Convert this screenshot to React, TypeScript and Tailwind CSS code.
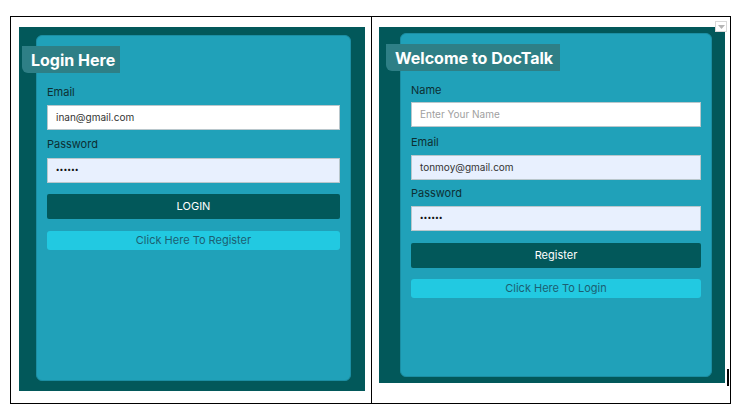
import React from "react";

const font = { fontFamily: "Inter, 'Noto Sans', sans-serif" };

function Label({ text, mt }: { text: string; mt: string }) {
  return <div className={`${mt} h-[16px] leading-[16px] text-[11px] text-[#0d2f33]`}>{text}</div>;
}

function Input({ value, placeholder, fill, mt }: { value?: string; placeholder?: string; fill?: boolean; mt: string }) {
  return (
    <div
      className={`${mt} h-[25px] flex items-center pl-[8px] border border-[#b9c7cc] text-[10px] ${
        fill ? "bg-[#e8f0fe]" : "bg-white"
      } ${value ? "text-[#333]" : "text-[#a0a0a0]"}`}
    >
      {value ?? placeholder}
    </div>
  );
}

function Dots({ mt }: { mt: string }) {
  return (
    <div className={`${mt} h-[25px] flex items-center pl-[8px] border border-[#b9c7cc] bg-[#e8f0fe] text-[#111] text-[7px] tracking-[0.5px] font-bold`}>
      ••••••
    </div>
  );
}

function Button({ text, mt }: { text: string; mt: string }) {
  return (
    <div className={`${mt} h-[25px] flex items-center justify-center bg-[#02585a] text-white text-[11px] rounded-[2px]`}>{text}</div>
  );
}

function Link({ text, mt }: { text: string; mt: string }) {
  return (
    <div className={`${mt} h-[19px] flex items-center justify-center bg-[#22c9e1] text-[#1c5f72] text-[11px] rounded-[3px]`}>{text}</div>
  );
}

function Badge({ text, w }: { text: string; w: string }) {
  return (
    <div className={`-ml-[15px] mt-[10px] h-[27px] ${w} bg-[#2e7f86] rounded-bl-[6px] flex items-center pl-[9px] text-white text-[16px] font-bold`}>
      {text}
    </div>
  );
}

export default function App() {
  return (
    <div className="w-[744px] h-[414px] bg-white relative" style={font}>
      <div className="absolute left-[10px] top-[16px] w-[721px] h-[388px] border border-black flex">
        {/* left cell */}
        <div className="w-[361px] h-full border-r border-black pl-[8px] pt-[10px]">
          <div className="w-[346px] h-[364px] bg-[#02585a] pl-[17px] pt-[8px]">
            <div className="w-[315px] h-[346px] bg-[#20a1b9] rounded-[6px] border border-[#1b8ea3]">
              <Badge text="Login Here" w="w-[98px]" />
              <div className="px-[10px]">
                <Label text="Email" mt="mt-[11px]" />
                <Input value="inan@gmail.com" mt="mt-[5px]" />
                <Label text="Password" mt="mt-[6px]" />
                <Dots mt="mt-[6px]" />
                <Button text="LOGIN" mt="mt-[11px]" />
                <Link text="Click Here To Register" mt="mt-[12px]" />
              </div>
            </div>
          </div>
        </div>
        {/* right cell */}
        <div className="flex-1 h-full pl-[7px] pt-[10px] relative">
          <div className="w-[346px] h-[356px] bg-[#02585a] pl-[21px] pt-[6px]">
            <div className="w-[312px] h-[344px] bg-[#20a1b9] rounded-[6px] border border-[#1b8ea3]">
              <Badge text="Welcome to DocTalk" w="w-[174px]" />
              <div className="px-[10px]">
                <Label text="Name" mt="mt-[11px]" />
                <Input placeholder="Enter Your Name" mt="mt-[4px]" />
                <Label text="Email" mt="mt-[7px]" />
                <Input value="tonmoy@gmail.com" fill mt="mt-[5px]" />
                <Label text="Password" mt="mt-[5px]" />
                <Dots mt="mt-[5px]" />
                <Button text="Register" mt="mt-[12px]" />
                <Link text="Click Here To Login" mt="mt-[11px]" />
              </div>
            </div>
          </div>
          <div className="absolute left-[343px] top-[4px] w-[12px] h-[11px] bg-white border border-[#d8d8d8] flex items-center justify-center">
            <svg width="7" height="4" viewBox="0 0 7 4"><path d="M0 0h7L3.5 4z" fill="#b5b5b5" /></svg>
          </div>
          <div className="absolute left-[355px] top-[352px] w-[2px] h-[17px] bg-black" />
        </div>
      </div>
    </div>
  );
}
